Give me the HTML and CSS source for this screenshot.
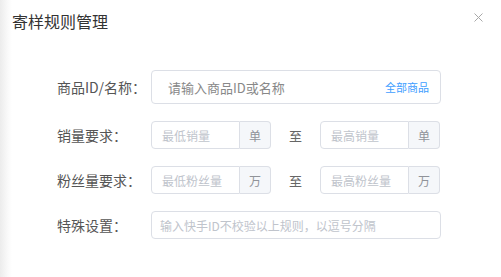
FILE: index.html
```html
<!DOCTYPE html>
<html lang="zh-CN">
<head>
  <meta charset="UTF-8" />
  <title>寄样规则管理</title>
  <link rel="stylesheet" href="styles.css">
</head>
<body>
  <div class="dialog">
    <div class="dialog-header">
      <span class="dialog-title">寄样规则管理</span>
      <svg class="close" width="9" height="9" viewBox="0 0 9 9">
        <path d="M0.5 0.5L8.5 8.5M8.5 0.5L0.5 8.5" stroke="#a8a8a8" stroke-width="1" fill="none" />
      </svg>
    </div>

    <div class="form">
      <!-- 商品 -->
      <div class="form-item">
        <label class="form-label">商品ID/名称：</label>
        <div class="input big">
          <span class="ph dark">请输入商品ID或名称</span>
          <span class="link">全部商品</span>
        </div>
      </div>

      <!-- 销量 -->
      <div class="form-item">
        <label class="form-label">销量要求：</label>
        <div class="input-group">
          <div class="input small"><span class="ph">最低销量</span></div>
          <div class="append">单</div>
        </div>
        <span class="to">至</span>
        <div class="input-group">
          <div class="input small"><span class="ph">最高销量</span></div>
          <div class="append">单</div>
        </div>
      </div>

      <!-- 粉丝量 -->
      <div class="form-item">
        <label class="form-label">粉丝量要求：</label>
        <div class="input-group">
          <div class="input small"><span class="ph">最低粉丝量</span></div>
          <div class="append">万</div>
        </div>
        <span class="to">至</span>
        <div class="input-group">
          <div class="input small"><span class="ph">最高粉丝量</span></div>
          <div class="append">万</div>
        </div>
      </div>

      <!-- 特殊设置 -->
      <div class="form-item">
        <label class="form-label">特殊设置：</label>
        <div class="input wide">
          <span class="ph">输入快手ID不校验以上规则，以逗号分隔</span>
        </div>
      </div>
    </div>
  </div>
</body>
</html>
```

FILE: styles.css
```css
body {
  margin: 0;
  font-family: "Noto Sans CJK SC", "Noto Sans", sans-serif;
  background: linear-gradient(to right, #ececec, #fafafa 8px, #fff 12px);
  height: 277px;
  overflow: hidden;
}
.dialog-header {
  display: flex;
  justify-content: space-between;
  align-items: center;
  padding: 9px 18px 0 12px;
  height: 24px;
}
.dialog-title {
  font-size: 16px;
  line-height: 24px;
  color: #333;
}
.close {
  margin-top: -8px;
}
.form {
  padding: 37px 0 0 57px;
}
.form-item {
  display: flex;
  align-items: center;
  margin-bottom: 17px;
}
.form-label {
  width: 94px;
  font-size: 14px;
  color: #555;
}
.input {
  box-sizing: border-box;
  border: 1px solid #dcdfe6;
  border-radius: 4px;
  display: flex;
  align-items: center;
  background: #fff;
}
.big {
  width: 290px;
  height: 34px;
  padding: 0 11px 0 16px;
  justify-content: space-between;
}
.wide {
  width: 290px;
  height: 28px;
  padding: 0 8px;
}
.input-group {
  display: flex;
  width: 120px;
  height: 28px;
}
.small {
  flex: 1;
  height: 28px;
  padding: 0 10px;
  border-radius: 4px 0 0 4px;
}
.append {
  box-sizing: border-box;
  width: 31px;
  height: 28px;
  border: 1px solid #dcdfe6;
  border-left: none;
  border-radius: 0 4px 4px 0;
  background: #f5f7fa;
  color: #909399;
  font-size: 12px;
  display: flex;
  align-items: center;
  justify-content: center;
}
.to {
  width: 49px;
  text-align: center;
  font-size: 13px;
  color: #666;
}
.ph {
  font-size: 12px;
  color: #c0c4cc;
}
.ph.dark {
  font-size: 13px;
  color: #888;
}
.link {
  font-size: 11px;
  color: #409eff;
}
```
